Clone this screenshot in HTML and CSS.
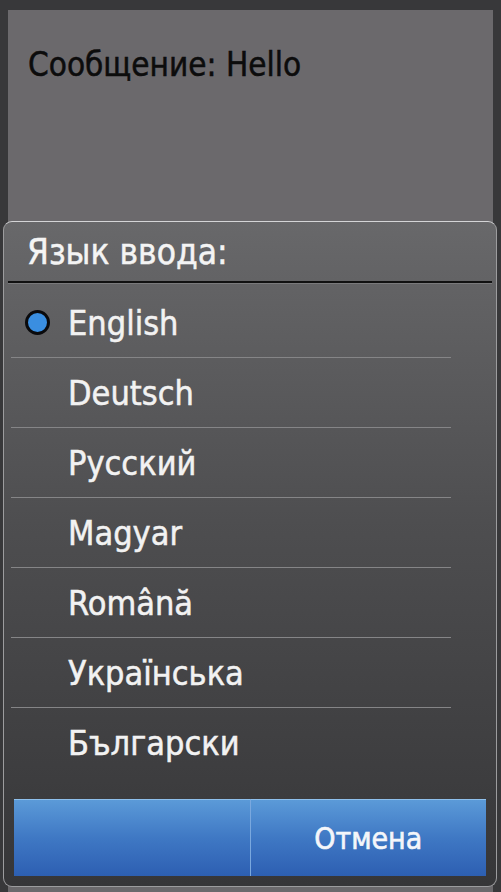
FILE: index.html
```html
<!DOCTYPE html>
<html lang="ru">
<head>
  <meta charset="UTF-8" />
  <title>Язык ввода</title>
  <link rel="stylesheet" href="styles.css">
</head>
<body>
  <div class="screen">
    <div class="message-panel">
      <p class="message">Сообщение: Hello</p>
    </div>

    <div class="dialog">
      <div class="dialog-header">Язык ввода:</div>
      <ul class="lang-list">
        <li class="lang-item selected"><span class="radio"></span>English</li>
        <li class="lang-item">Deutsch</li>
        <li class="lang-item">Русский</li>
        <li class="lang-item">Magyar</li>
        <li class="lang-item">Română</li>
        <li class="lang-item">Українська</li>
        <li class="lang-item last">Български</li>
      </ul>
      <div class="button-bar">
        <div class="btn"></div>
        <div class="btn">Отмена</div>
      </div>
    </div>
  </div>
</body>
</html>
```

FILE: styles.css
```css
* { margin: 0; padding: 0; box-sizing: border-box; }
body {
  font-family: "DejaVu Sans Condensed", "DejaVu Sans", sans-serif;
  font-stretch: condensed;
  background: #38383a;
  width: 501px; height: 892px; overflow: hidden;
}
.screen {
  position: relative; height: 892px;
  padding: 10px 8px 0 8px;
}
.message-panel {
  height: 882px;
  background: #6b696c;
  padding: 35px 0 0 20px;
}
.message {
  font-size: 33px; color: #0c0c0c;
  -webkit-text-stroke: 0.5px #0c0c0c;
}

.dialog {
  position: absolute; left: 3px; right: 4px; top: 221px; bottom: 5px;
  border-radius: 9px;
  border: 1px solid #9c9c9e;
  border-top-color: #d4d4d6;
  background: linear-gradient(to bottom, #68686a 0%, #4e4e50 45%, #363638 100%);
  display: flex; flex-direction: column;
  overflow: hidden;
}
.dialog-header {
  height: 61px;
  padding: 10px 0 0 19px;
  font-size: 35px; color: #f4f4f4;
  -webkit-text-stroke: 0.5px #f4f4f4;
  border-bottom: 2px solid #111;
  margin: 0 4px;
  box-shadow: 0 1px 0 #7a7a7c;
}
.lang-list {
  list-style: none;
  padding-top: 5px;
}
.lang-item {
  display: flex; align-items: center;
  height: 70px;
  margin-left: 7px; width: 440px;
  padding-left: 57px;
  font-size: 34px; color: #f2f2f2;
  -webkit-text-stroke: 0.5px #f2f2f2;
  border-bottom: 1px solid #858587;
}
.lang-item.last { border-bottom: none; }
.radio {
  position: absolute; left: 21px;
  width: 25px; height: 25px; border-radius: 50%;
  background: #3a8ee0;
  border: 3px solid #0a0a0c;
}
.button-bar {
  display: flex;
  margin: 21px 10px 0 10px;
  height: 77px;
}
.btn {
  flex: 1;
  display: flex; align-items: center; justify-content: center;
  background: linear-gradient(to bottom, #5b9ad8 0%, #3f78c4 50%, #2d5fb2 100%);
  border-top: 1px solid #8fc0ec;
  color: #f4f6fa; font-size: 30px;
  -webkit-text-stroke: 0.6px #f4f6fa;
}
.btn + .btn { border-left: 1px solid #7aa8de; }
```
